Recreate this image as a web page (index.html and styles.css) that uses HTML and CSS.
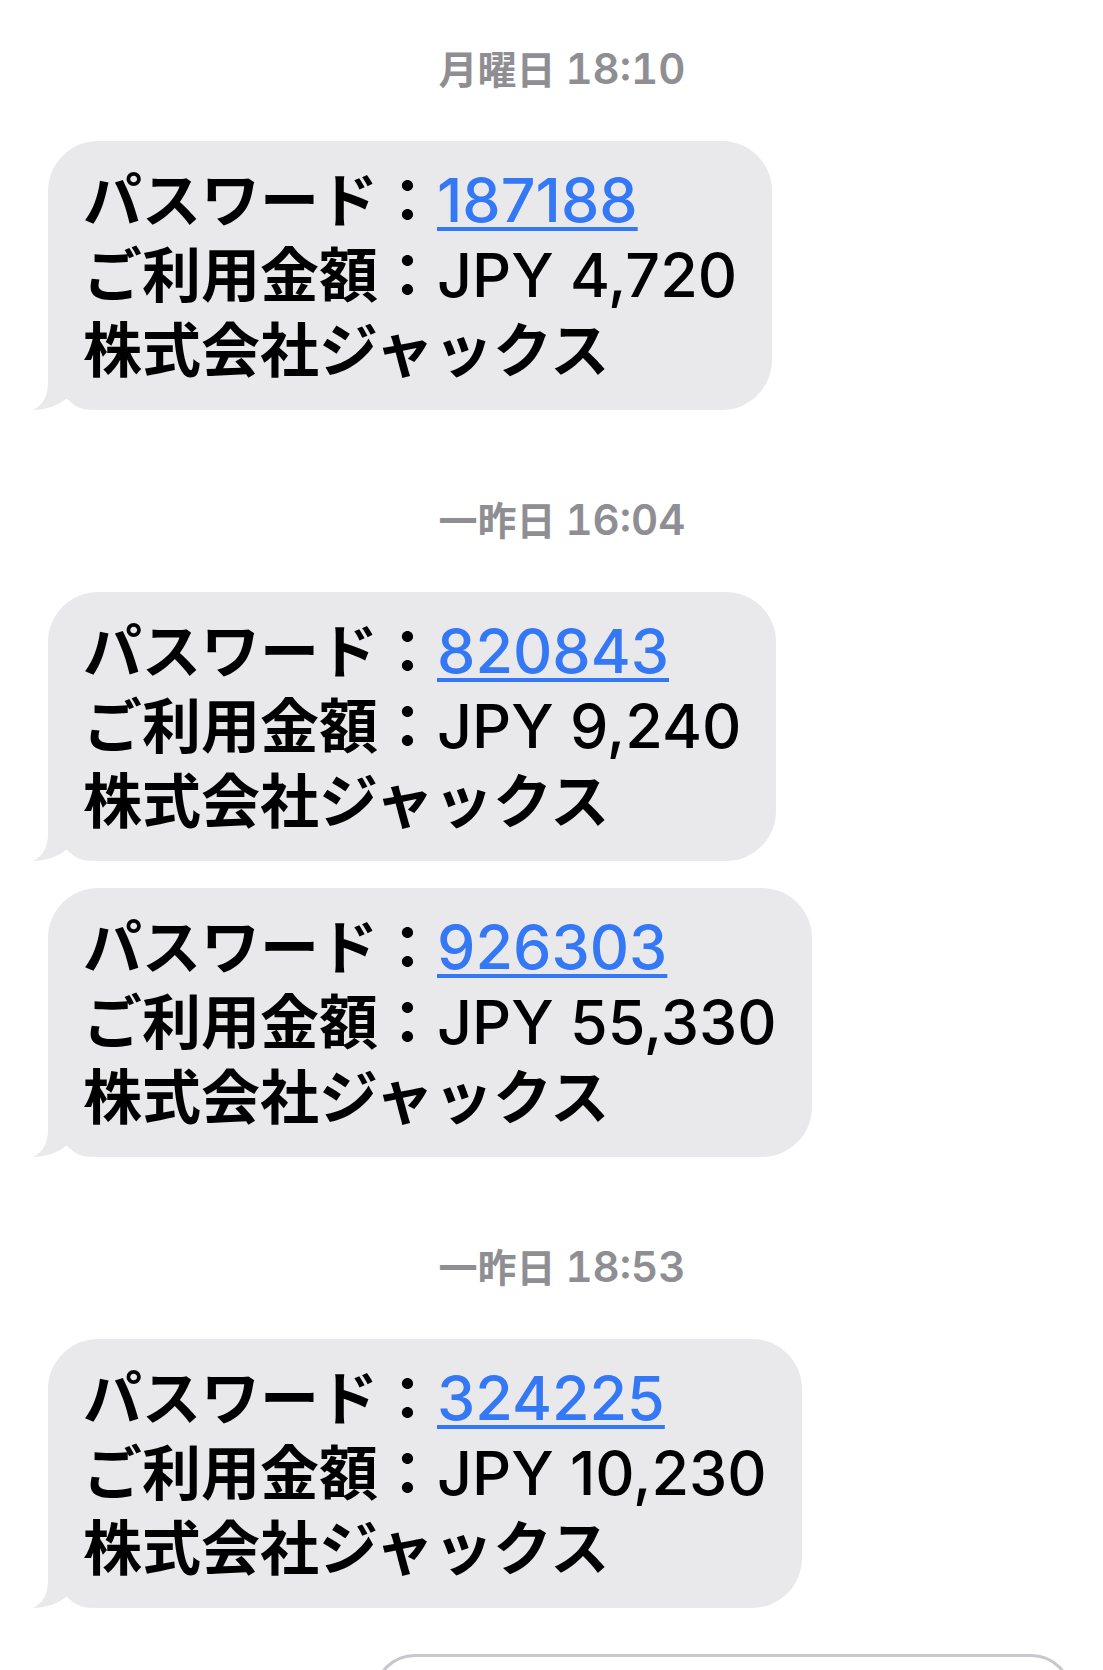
FILE: index.html
```html
<!DOCTYPE html>
<html lang="ja">
<head>
    <meta charset="UTF-8">
    <meta name="viewport" content="width=device-width, initial-scale=1.0">
    <title>メッセージ</title>
    <link rel="stylesheet" href="styles.css">
</head>
<body>
    <div class="thread">
        <!-- 月曜日 -->
        <div class="stamp">月曜日 <span class="time">18:10</span></div>
        <div class="bubble">
            <span class="line">パスワード：<a class="code" href="#">187188</a></span>
            <span class="line">ご利用金額：<span class="num">JPY 4,720</span></span>
            <span class="line">株式会社ジャックス</span>
            <svg class="tail" width="60" height="50" viewBox="0 0 60 50"><path d="M15,0 V22 C15,36 10,45 0,50 C12,50 25,46 34,38 C40,46 48,50 60,50 V0 Z"/></svg>
        </div>

        <!-- 一昨日 16:04 -->
        <div class="stamp">一昨日 <span class="time">16:04</span></div>
        <div class="bubble">
            <span class="line">パスワード：<a class="code" href="#">820843</a></span>
            <span class="line">ご利用金額：<span class="num">JPY 9,240</span></span>
            <span class="line">株式会社ジャックス</span>
            <svg class="tail" width="60" height="50" viewBox="0 0 60 50"><path d="M15,0 V22 C15,36 10,45 0,50 C12,50 25,46 34,38 C40,46 48,50 60,50 V0 Z"/></svg>
        </div>
        <div class="bubble">
            <span class="line">パスワード：<a class="code" href="#">926303</a></span>
            <span class="line">ご利用金額：<span class="num">JPY 55,330</span></span>
            <span class="line">株式会社ジャックス</span>
            <svg class="tail" width="60" height="50" viewBox="0 0 60 50"><path d="M15,0 V22 C15,36 10,45 0,50 C12,50 25,46 34,38 C40,46 48,50 60,50 V0 Z"/></svg>
        </div>

        <!-- 一昨日 18:53 -->
        <div class="stamp">一昨日 <span class="time">18:53</span></div>
        <div class="bubble">
            <span class="line">パスワード：<a class="code" href="#">324225</a></span>
            <span class="line">ご利用金額：<span class="num">JPY 10,230</span></span>
            <span class="line">株式会社ジャックス</span>
            <svg class="tail" width="60" height="50" viewBox="0 0 60 50"><path d="M15,0 V22 C15,36 10,45 0,50 C12,50 25,46 34,38 C40,46 48,50 60,50 V0 Z"/></svg>
        </div>

        <div class="reply"></div>
    </div>
</body>
</html>
```

FILE: styles.css
```css
body {
    margin: 0;
    background: #ffffff;
    font-family: Inter, "Noto Sans CJK JP", sans-serif;
    overflow: hidden;
}

.thread {
    display: flex;
    flex-direction: column;
    align-items: flex-start;
    padding: 45px 0 0 48px;
}

.stamp {
    align-self: stretch;
    text-align: center;
    padding-right: 27px;
    font-size: 39px;
    line-height: 48px;
    font-weight: 600;
    color: #8e8e93;
    margin: 86px 0 47px;
}

.stamp:first-child {
    margin-top: 0;
}

.time {
    font-size: 42px;
    font-variant-numeric: tabular-nums;
}

.bubble {
    position: relative;
    display: flex;
    flex-direction: column;
    background: #e9e9eb;
    border-radius: 50px;
    padding: 22px 35px 22px 35px;
    font-size: 59px;
    line-height: 75px;
    font-weight: 600;
    color: #000000;
}

.bubble + .bubble {
    margin-top: 27px;
}

.line {
    white-space: nowrap;
}

.num,
.code {
    font-size: 61px;
    line-height: 75px;
    font-weight: 500;
}

.code {
    color: #3478f6;
    text-decoration: underline;
    text-decoration-thickness: 4px;
    text-underline-offset: 5px;
}

.tail {
    position: absolute;
    left: -15px;
    bottom: 0;
    fill: #e9e9eb;
}

.reply {
    width: 694px;
    height: 80px;
    margin: 46px 0 0 325px;
    border: 3px solid #c7c7cc;
    border-radius: 42px;
}
```
